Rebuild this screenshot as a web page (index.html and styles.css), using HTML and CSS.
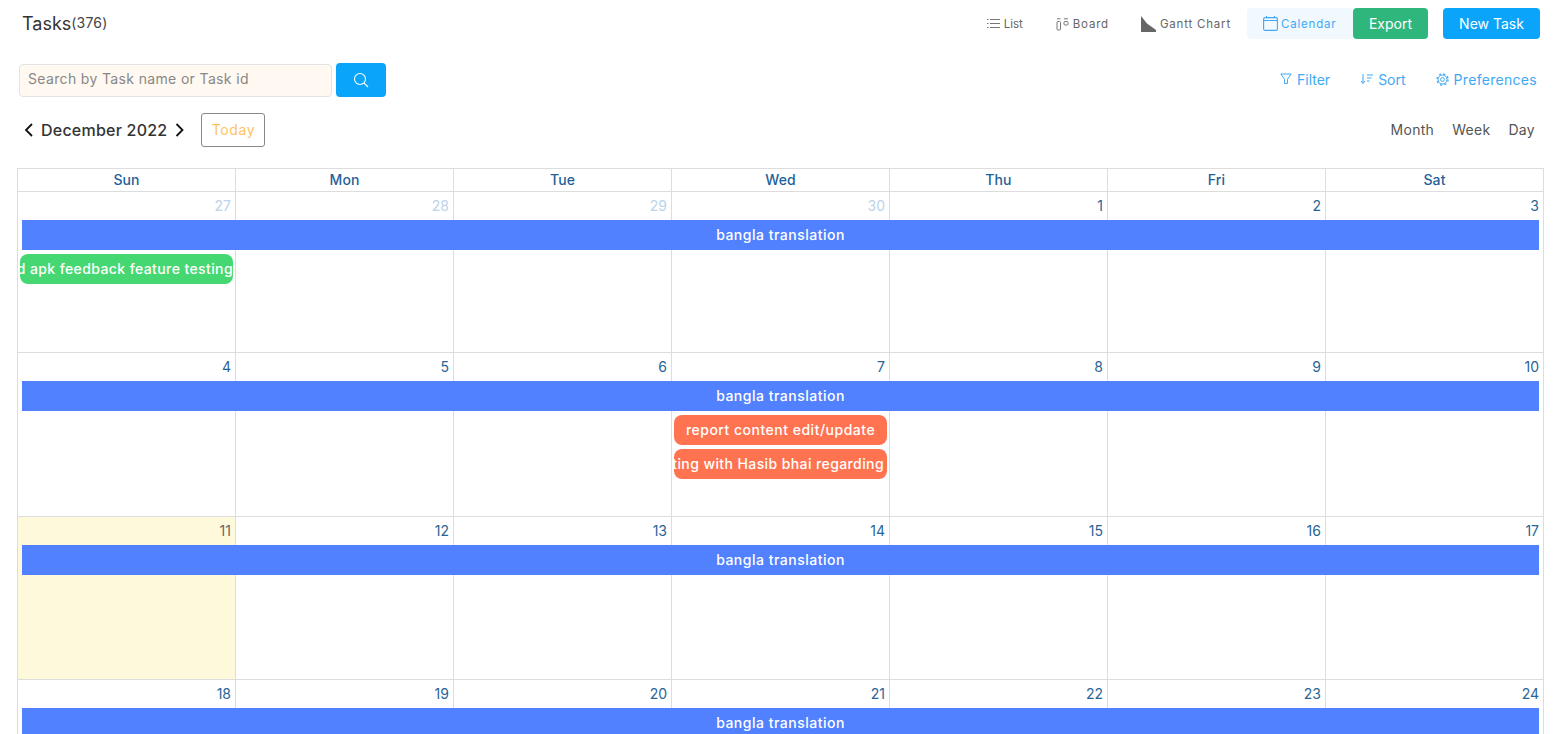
FILE: index.html
```html
<!DOCTYPE html>
<html lang="en">
<head>
<meta charset="utf-8">
<title>Tasks</title>
<link rel="stylesheet" href="styles.css">
</head>
<body>
<div class="page">
  <header class="topbar">
    <h1 class="title">Tasks<span class="count">(376)</span></h1>
    <nav class="views">
      <a class="view view-list"><svg class="ico" viewBox="0 0 13 11" width="13" height="11"><path d="M0 1.500h1.500M0 5.500h1.500M0 9.500h1.500M3 1.500h10M3 5.500h10M3 9.500h10" stroke="#777" stroke-width="1.100" fill="none"/></svg>List</a>
      <a class="view view-board"><svg class="ico" viewBox="0 0 13 14" width="13" height="14"><rect x="1" y="4.500" width="3.500" height="8.500" rx="1" fill="none" stroke="#777"/><rect x="8" y="4.500" width="4" height="3.500" rx="1" fill="none" stroke="#777"/><path d="M1 1.800h3.500M8 1.800h4" stroke="#777"/></svg>Board</a>
      <a class="view view-gantt"><svg class="ico" viewBox="0 0 15 16" width="15" height="16"><path d="M0 0l6 7.500 9 6.500v2H0z" fill="#666"/></svg>Gantt Chart</a>
      <a class="view view-cal"><svg class="ico" viewBox="0 0 15 15" width="15" height="15"><rect x=".6" y="1.600" width="13.800" height="12.800" rx="1.500" fill="none" stroke="#3fa9f5" stroke-width="1.100"/><path d="M.6 4.500h13.800M3.500 0v2M11.500 0v2" stroke="#3fa9f5" stroke-width="1.100"/></svg>Calendar</a>
    </nav>
    <button class="btn btn-export">Export</button>
    <button class="btn btn-new">New Task</button>
  </header>

  <section class="toolbar">
    <input class="search" type="text" placeholder="Search by Task name or Task id">
    <button class="search-btn" aria-label="Search"><svg viewBox="0 0 16 16" width="16" height="16"><circle cx="7" cy="7" r="5.500" fill="none" stroke="#fff" stroke-width="1.100"/><path d="M11 11l4 4" stroke="#fff" stroke-width="1.100"/></svg></button>
    <div class="tools">
      <a class="tool tool-filter"><svg viewBox="0 0 12 12" width="12" height="12"><path d="M.8 1h10.400L7.500 6.200v4.300h-3V6.200z" fill="none" stroke="#3fa9f5"/></svg>Filter</a>
      <a class="tool tool-sort"><svg viewBox="0 0 13 12" width="13" height="12"><path d="M3 1v9M1 8l2 2.500L5 8" fill="none" stroke="#3fa9f5"/><path d="M7 2h6M7 5h4.500M7 8h2.500" stroke="#3fa9f5"/></svg>Sort</a>
      <a class="tool tool-pref"><svg viewBox="0 0 13 13" width="13" height="13"><circle cx="6.500" cy="6.500" r="4.500" fill="none" stroke="#3fa9f5"/><circle cx="6.500" cy="6.500" r="5.600" fill="none" stroke="#3fa9f5" stroke-width="1.200" stroke-dasharray="2.200 2.200"/><circle cx="6.500" cy="6.500" r="1.900" fill="none" stroke="#3fa9f5"/></svg>Preferences</a>
    </div>
  </section>

  <section class="calnav">
    <svg class="chev" viewBox="0 0 10 14" width="10" height="14"><path d="M8 1L2 7l6 6" fill="none" stroke="#111" stroke-width="1.800"/></svg>
    <span class="month-label">December 2022</span>
    <svg class="chev chev-next" viewBox="0 0 10 14" width="10" height="14"><path d="M2 1l6 6-6 6" fill="none" stroke="#111" stroke-width="1.800"/></svg>
    <button class="today">Today</button>
    <div class="modes"><a>Month</a><a>Week</a><a>Day</a></div>
  </section>

  <section class="calendar">
    <div class="head"><div>Sun</div><div>Mon</div><div>Tue</div><div>Wed</div><div>Thu</div><div>Fri</div><div>Sat</div></div>

    <div class="week week-1">
      <div class="day muted c1">27</div><div class="day muted c2">28</div><div class="day muted c3">29</div><div class="day muted c4">30</div><div class="day c5">1</div><div class="day c6">2</div><div class="day c7">3</div>
      <div class="bar">bangla translation</div>
      <div class="pill green c1 r3 end-flush">d apk feedback feature testing</div>
    </div>

    <div class="week week-2">
      <div class="day c1">4</div><div class="day c2">5</div><div class="day c3">6</div><div class="day c4">7</div><div class="day c5">8</div><div class="day c6">9</div><div class="day c7">10</div>
      <div class="bar">bangla translation</div>
      <div class="pill orange c4 r3 centered">report content edit/update</div>
      <div class="pill orange c4 r4">ting with Hasib bhai regarding</div>
    </div>

    <div class="week week-3">
      <div class="day today-cell c1">11</div><div class="day c2">12</div><div class="day c3">13</div><div class="day c4">14</div><div class="day c5">15</div><div class="day c6">16</div><div class="day c7">17</div>
      <div class="bar">bangla translation</div>
    </div>

    <div class="week week-4">
      <div class="day c1">18</div><div class="day c2">19</div><div class="day c3">20</div><div class="day c4">21</div><div class="day c5">22</div><div class="day c6">23</div><div class="day c7">24</div>
      <div class="bar">bangla translation</div>
    </div>
  </section>
</div>
</body>
</html>
```

FILE: styles.css
```css
* { box-sizing: border-box; }
html, body { margin: 0; height: 100%; overflow: hidden; background: #fff; }
body { font-family: "Inter", "Open Sans", sans-serif; color: #333; }
button { font-family: inherit; border: 0; cursor: pointer; padding: 0; }
a { display: inline-flex; align-items: center; }

.page { height: 734px; overflow: hidden; }

.topbar { display: flex; align-items: center; height: 31px; margin-top: 8px; padding: 0 17px 0 22px; }
.title { margin: 0 auto 0 0; font-size: 18px; font-weight: 400; color: #333; }
.count { font-size: 14px; vertical-align: 2px; color: #444; letter-spacing: .2px; }
.views { display: flex; align-items: center; height: 31px; }
.view { height: 31px; font-size: 11.500px; color: #666; gap: 4px; letter-spacing: .8px; }
.view-list { margin-right: 33px; letter-spacing: 0; }
.view-board { margin-right: 32px; }
.view-gantt { margin-right: 16px; }
.view-cal { width: 106px; padding-left: 16px; gap: 3px; background: #f1f8fe; color: #3fa9f5; border-radius: 4px 0 0 4px; }
.btn { height: 31px; color: #fff; font-size: 14px; border-radius: 4px; padding-bottom: 1px; }
.btn-export { width: 75px; background: #2eb67d; margin-right: 15px; }
.btn-new { width: 97px; background: #0aa5fb; }

.toolbar { display: flex; align-items: center; height: 34px; margin-top: 24px; padding: 0 20px 0 19px; }
.search { width: 313px; height: 33px; background: #fff9f1; border: 1px solid #e3e3e3; border-radius: 4px; padding: 0 8px 3px; font: 14px "Inter", sans-serif; letter-spacing: .35px; }
.search::placeholder { color: #888; opacity: 1; }
.search-btn { width: 50px; height: 34px; margin-left: 4px; background: #0aa5fb; border-radius: 4px; display: flex; align-items: center; justify-content: center; }
.tools { margin-left: auto; display: flex; align-items: center; padding-bottom: 2px; }
.tool { font-size: 14px; color: #3fa9f5; gap: 5px; }
.tool-filter { margin-right: 30px; }
.tool-sort { margin-right: 30px; }
.tool-pref { letter-spacing: .3px; }

.calnav { display: flex; align-items: center; height: 34px; margin-top: 16px; padding: 0 22px 0 24px; }
.chev { width: 10px; }
.month-label { margin-left: 7px; font-size: 16px; font-weight: 500; color: #333; letter-spacing: .23px; }
.chev-next { margin-left: 7px; width: 11px; }
.today { width: 64px; height: 34px; margin-left: 16px; background: #fff; border: 1px solid #888; border-radius: 3px; color: #fdc45f; font-size: 14px; letter-spacing: .6px; padding-bottom: 1px; }
.modes { margin-left: auto; display: flex; gap: 18px; font-size: 14px; color: #555; letter-spacing: .3px; padding-bottom: 2px; }

.calendar { width: 1527px; margin: 21px 0 0 17px; border-right: 1px solid #ddd; border-top: 1px solid #ddd; }
.head, .week { display: grid; grid-template-columns: repeat(7, 218px); }
.head { height: 23px; border-bottom: 1px solid #ddd; }
.head > div { display: flex; align-items: center; justify-content: center; padding-bottom: 1px; font-size: 14px; font-weight: 500; color: #1f6199; border-left: 1px solid #ddd; letter-spacing: .1px; }

.week { grid-template-rows: 28px 30px 34px 34px 1fr; border-bottom: 1px solid #ddd; }
.week-1 { height: 161px; }
.week-2 { height: 164px; }
.week-3 { height: 163px; }
.week-4 { height: 163px; }

.day { grid-row: 1 / -1; padding: 5px 4px 0 0; text-align: right; font-size: 14px; color: #2a6496; border-left: 1px solid #ddd; }
.c1 { grid-column: 1; }
.c2 { grid-column: 2; }
.c3 { grid-column: 3; }
.c4 { grid-column: 4; }
.c5 { grid-column: 5; }
.c6 { grid-column: 6; }
.c7 { grid-column: 7; }
.muted { color: #bcd3e8; }
.today-cell { background: #fff9dc; color: #666; }

.bar { grid-column: 1 / -1; grid-row: 2; margin: 0 4px 0 5px; padding-bottom: 2px; display: flex; align-items: center; justify-content: center; background: #5181fe; color: #fff; font-size: 14px; font-weight: 500; letter-spacing: .5px; z-index: 1; }

.pill { height: 30px; margin: 4px 2px 0 3px; border-radius: 8px; display: flex; align-items: center; justify-content: flex-end; padding: 0 3px 2px 0; overflow: hidden; white-space: nowrap; color: #fff; font-size: 14px; font-weight: 500; letter-spacing: .4px; z-index: 1; }
.r3 { grid-row: 3; }
.r4 { grid-row: 4; }
.green { background: #45d872; }
.orange { background: #ff7350; }
.centered { justify-content: center; padding-right: 0; letter-spacing: .5px; }
.end-flush { padding-right: 0; }
```
